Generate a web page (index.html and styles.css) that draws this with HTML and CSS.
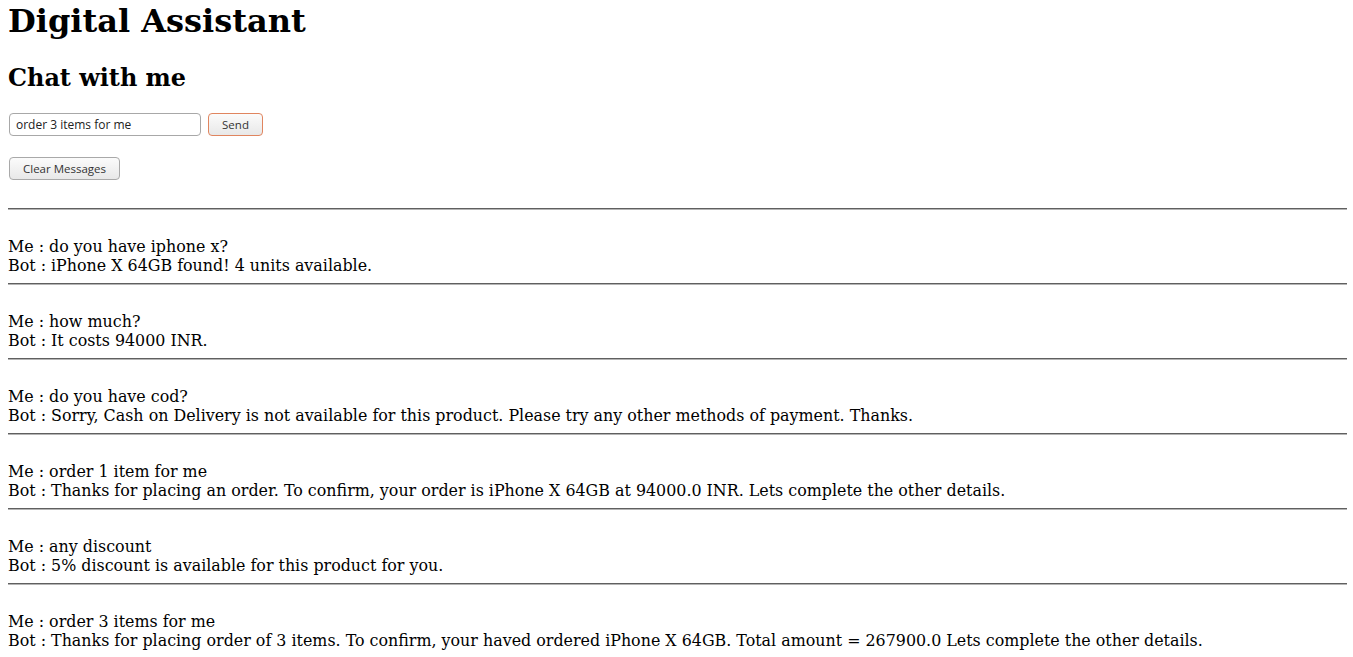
FILE: index.html
```html
<!DOCTYPE html>
<html>
<head>
<meta charset="utf-8">
<title>Digital Assistant</title>
<link rel="stylesheet" href="styles.css">
</head>
<body class="page">
<h1 class="title">Digital Assistant</h1>
<h2 class="subtitle">Chat with me</h2>
<form class="chat-form">
  <input class="chat-input" type="text" value="order 3 items for me">
  <button class="btn btn-send" type="button">Send</button>
</form>
<div class="clear-row">
  <button class="btn" type="button">Clear Messages</button>
</div>
<hr class="rule">
<div class="messages">
  <div class="msg">
    <div class="line">Me : do you have iphone x?</div>
    <div class="line">Bot : iPhone X 64GB found! 4 units available.</div>
  </div>
  <hr class="rule">
  <div class="msg">
    <div class="line">Me : how much?</div>
    <div class="line">Bot : It costs 94000 INR.</div>
  </div>
  <hr class="rule">
  <div class="msg">
    <div class="line">Me : do you have cod?</div>
    <div class="line">Bot : Sorry, Cash on Delivery is not available for this product. Please try any other methods of payment. Thanks.</div>
  </div>
  <hr class="rule">
  <div class="msg">
    <div class="line">Me : order 1 item for me</div>
    <div class="line">Bot : Thanks for placing an order. To confirm, your order is iPhone X 64GB at 94000.0 INR. Lets complete the other details.</div>
  </div>
  <hr class="rule">
  <div class="msg">
    <div class="line">Me : any discount</div>
    <div class="line">Bot : 5% discount is available for this product for you.</div>
  </div>
  <hr class="rule">
  <div class="msg">
    <div class="line">Me : order 3 items for me</div>
    <div class="line">Bot : Thanks for placing order of 3 items. To confirm, your haved ordered iPhone X 64GB. Total amount = 267900.0 Lets complete the other details.</div>
  </div>
</div>
</body>
</html>
```
FILE: styles.css
```css
html, body {
  background: #ffffff;
}
.page {
  margin: 0 6px 0 8px;
  font-family: "DejaVu Serif", serif;
  font-size: 15.88px;
  color: #000;
}
.title {
  font-size: 32px;
  font-weight: bold;
  margin: 3px 0 0 0;
  line-height: 37px;
}
.subtitle {
  font-size: 23.9px;
  font-weight: bold;
  margin: 24px 0 0 0;
  line-height: 28px;
}
.chat-form {
  display: flex;
  align-items: center;
  gap: 7px;
  margin: 21px 0 0 1px;
}
.chat-input {
  box-sizing: border-box;
  width: 192px;
  height: 23px;
  padding: 0 6px;
  border: 1px solid #a8a8a8;
  border-radius: 4px;
  font-family: "Open Sans", "DejaVu Sans", sans-serif;
  font-size: 12px;
  color: #222;
  background: #fff;
  outline: none;
}
.btn {
  box-sizing: border-box;
  height: 23px;
  padding: 0 13px;
  border: 1px solid #a9a9a9;
  border-radius: 4px;
  background: linear-gradient(#fbfbfb, #e8e8e8);
  font-family: "Open Sans", "DejaVu Sans", sans-serif;
  font-size: 11.5px;
  color: #333;
}
.btn-send {
  border-color: #e0855f;
  width: 55px;
  padding: 0;
}
.clear-row {
  margin: 21px 0 0 1px;
}
.clear-row .btn {
  width: 111px;
  padding: 0;
}
.rule {
  margin: 28px 0 0 0;
  height: 0;
  border: 0;
  border-top: 1px solid #606060;
  border-bottom: 1px solid #b4b4b4;
}
.messages .rule {
  margin: 8px 0 0 0;
}
.msg {
  padding-top: 27px;
  line-height: 19px;
}
```
